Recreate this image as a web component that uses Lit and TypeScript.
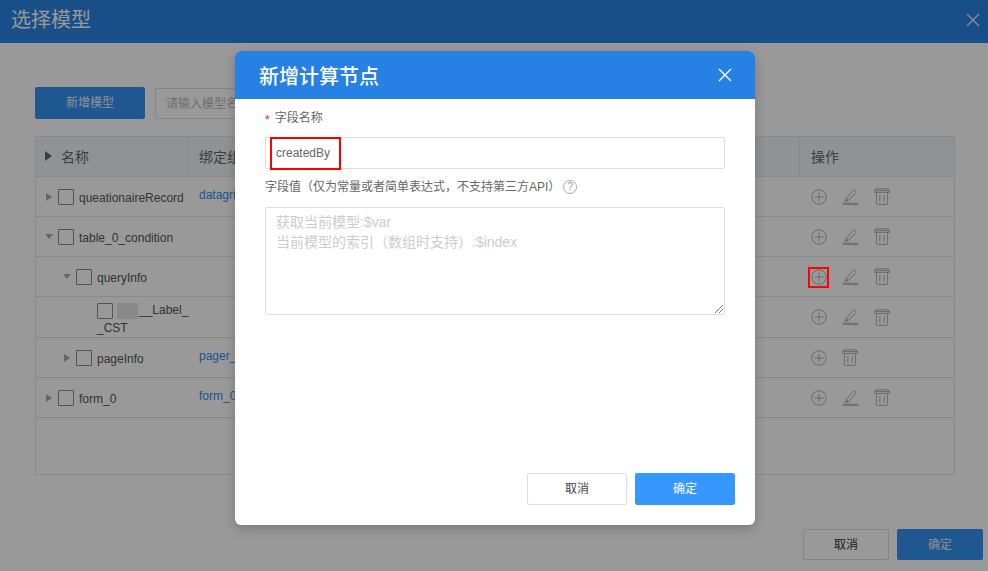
import { LitElement, html, css, svg } from "lit";
import { customElement } from "lit/decorators.js";

const plus = html`<svg class="ic" viewBox="0 0 16 16"><circle cx="8" cy="8" r="7.2"/><path d="M8 3.6v8.8M3.6 8h8.8"/></svg>`;
const edit = html`<svg class="ic edit" viewBox="0 0 17 16"><path d="M.6 14.2h15q.8 0 .8.7t-.8.7H.6M3.2 12.4l1-3L11.2 1.4q.7-.7 1.5 0l1 .9q.6.7 0 1.4L6.4 11.4z"/><path d="M3.2 12.4l3.2-1M4.2 9.4l2.2 2"/></svg>`;
const trash = html`<svg class="ic trash" viewBox="0 0 16 17"><path d="M.6 4.4V3.2Q.6.8 3 .8h10q2.4 0 2.4 2.4v1.2zM.6 2.6h14.8M2.4 4.4v10.8q0 1.2 1.2 1.2h8.8q1.2 0 1.2-1.2V4.4M5.8 7.2v6.4M10.2 7.2v6.4"/></svg>`;
const x = svg`<path d="M1 1l12 12M13 1L1 13"/>`;

type Row = { name: string; indent: number; arrow: "r" | "d" | ""; link?: string; edit?: boolean };
const rows: Row[] = [
  { name: "queationaireRecord", indent: 0, arrow: "r", link: "datagrid_0", edit: true },
  { name: "table_0_condition", indent: 0, arrow: "d", edit: true },
  { name: "queryInfo", indent: 1, arrow: "d", edit: true },
  { name: "", indent: 2, arrow: "", edit: true },
  { name: "pageInfo", indent: 1, arrow: "r", link: "pager_0", edit: false },
  { name: "form_0", indent: 0, arrow: "r", link: "form_0", edit: true },
];

@customElement("app-root")
export class AppRoot extends LitElement {
  static styles = css`
    :host { display: block; width: 988px; height: 571px; position: relative; overflow: hidden; background: #fff;
      font-family: "Liberation Sans", "Noto Sans CJK SC", sans-serif; font-size: 12px; color: #555; }
    .page { display: flex; flex-direction: column; height: 571px; }
    .top { height: 43px; flex: none; background: #2884e4; color: #fff; display: flex; align-items: center; justify-content: space-between; padding: 0 8px 3px 11px; box-sizing: border-box; }
    .top h1 { margin: 0; font-size: 20px; font-weight: 400; line-height: 40px; }
    .top svg { width: 14px; height: 14px; stroke: #e4e8ee; stroke-width: 1.4; fill: none; }
    .tools { display: flex; gap: 10px; padding: 44px 0 0 35px; height: 32px; flex: none; }
    .btn { box-sizing: border-box; display: flex; align-items: center; justify-content: center; border-radius: 2px; font-size: 12px; padding-bottom: 3px; }
    .add { width: 110px; height: 32px; background: #3592f0; color: #e8eef8; }
    .search { width: 240px; height: 31px; margin-top: 1px; border: 1px solid #ddd; border-radius: 2px; box-sizing: border-box; color: #bbb; padding: 0 0 3px 10px; display: flex; align-items: center; }
    .table { margin: 17px 33px 0 35px; height: 339px; flex: none; border: 1px solid #e3e5e8; box-sizing: border-box; }
    .head, .row { display: grid; grid-template-columns: 152px 612px 1fr; box-sizing: border-box; border-bottom: 1px solid #e3e5e8; }
    .head { height: 40px; background: #f2f4f7; font-size: 14px; color: #666; }
    .head > div { display: flex; align-items: center; box-sizing: border-box; border-right: 1px solid #e3e5e8; padding: 0 0 2px 11px; }
    .head > div:last-child { border-right: 0; }
    .head .a { padding-left: 9px; gap: 9px; }
    .row { height: 40px; color: #555; }
    .row.tall { height: 41px; }
    .cell { display: flex; align-items: center; box-sizing: border-box; }
    .txt { margin-top: 2px; }
    .arr { width: 0; height: 0; flex: none; }
    .arr.r { border-left: 6px solid #a8abb2; border-top: 4px solid transparent; border-bottom: 4px solid transparent; margin: 0 6px 0 1px; }
    .arr.d { border-top: 5px solid #a8abb2; border-left: 4px solid transparent; border-right: 4px solid transparent; margin: 0 5px 0 0; }
    .arr.head-arr { border-left: 7px solid #666; border-top: 5px solid transparent; border-bottom: 5px solid transparent; margin: 0; }
    .chk { width: 16px; height: 16px; border: 1px solid #8a8c92; border-radius: 1px; box-sizing: border-box; flex: none; background: #fff; margin-right: 5px; }
    .link { color: #2f8cee; padding-left: 11px; margin-top: -4px; }
    .ops { display: flex; align-items: center; padding-left: 11px; gap: 15px; }
    .ic { width: 16px; height: 16px; fill: none; stroke: #b0b0b0; stroke-width: 1; display: block; flex: none; }
    .ic.edit { width: 17px; }
    .ic.trash { width: 16px; height: 17px; }
    .wrapname { padding-left: 61px; display: block; line-height: 18px; padding-top: 4px; white-space: nowrap; box-sizing: border-box; }
    .wrapname .chk { display: inline-block; vertical-align: middle; margin-right: 4px; }
    .blur { display: inline-block; width: 21px; height: 16px; background: #e4e4e4; vertical-align: middle; filter: blur(0.6px); margin-right: 1px; }
    .foot { display: flex; justify-content: flex-end; gap: 8px; padding: 54px 5px 0 0; }
    .foot .btn { width: 86px; height: 31px; font-size: 12px; }
    .cancel { border: 1px solid #ddd; color: #333; background: #fff; }
    .ok { background: #3592f0; color: #e8eef8; }
    .mask { position: absolute; inset: 0; background: rgba(0, 0, 0, 0.4); }
    .dialog { position: absolute; left: 235px; top: 51px; width: 520px; height: 474px; background: #fff; border-radius: 6px; overflow: hidden; display: flex; flex-direction: column; box-shadow: 0 4px 12px rgba(0,0,0,.2); }
    .dh { height: 48px; flex: none; background: #2780e3; color: #fff; display: flex; align-items: center; justify-content: space-between; padding: 0 23px 0 24px; }
    .dh h2 { margin: 0; font-size: 20px; font-weight: 500; }
    .dh svg { width: 14px; height: 14px; stroke: #fff; stroke-width: 1.4; fill: none; }
    .db { flex: 1; padding: 11px 30px 0; display: flex; flex-direction: column; color: #666; }
    .lbl { line-height: 16px; height: 16px; display: flex; align-items: center; }
    .star { color: #e2231a; line-height: 10px; margin: 4px 5px 0 0; font-family: "Liberation Sans", sans-serif; }
    .input { height: 32px; margin-top: 11px; border: 1px solid #ddd; border-radius: 2px; box-sizing: border-box; display: flex; align-items: center; padding-left: 10px; color: #666; }
    .lbl2 { margin-top: 10px; gap: 3px; }
    .help { width: 14px; height: 14px; border: 1px solid #aaa; border-radius: 50%; font-size: 10px; color: #999; display: flex; align-items: center; justify-content: center; box-sizing: border-box; }
    .ta { height: 108px; margin-top: 12px; border: 1px solid #ddd; border-radius: 2px; box-sizing: border-box; padding: 4px 10px; color: #ccc; font-size: 14px; line-height: 20px; position: relative; }
    .grip { position: absolute; right: 1px; bottom: 1px; width: 8px; height: 8px; }
    .grip path { stroke: #777; stroke-width: 1; fill: none; }
    .df { display: flex; justify-content: flex-end; gap: 8px; padding: 0 20px; height: 32px; margin-top: auto; margin-bottom: 20px; }
    .df .btn { width: 100px; height: 32px; font-size: 12px; }
    .df .cancel { border: 1px solid #ddd; color: #444; }
    .df .ok2 { background: #3698ff; color: #fff; }
    .mark { position: absolute; border: 2px solid #f00; box-sizing: border-box; }
    .m1 { left: 270px; top: 137px; width: 71px; height: 33px; }
    .m2 { left: 808px; top: 267px; width: 21px; height: 21px; }
  `;

  private row(r: Row) {
    if (r.indent === 2) {
      return html`<div class="row tall">
        <div class="wrapname"><span class="chk"></span><span class="blur"></span>__Label_<br />_CST</div>
        <div></div>
        <div class="ops">${plus}${edit}${trash}</div>
      </div>`;
    }
    return html`<div class="row">
      <div class="cell" style="padding-left:${9 + r.indent * 18}px">
        <span class="arr ${r.arrow}"></span><span class="chk"></span><span class="txt">${r.name}</span>
      </div>
      <div class="cell"><span class="link">${r.link ?? ""}</span></div>
      <div class="ops">${plus}${r.edit ? edit : ""}${trash}</div>
    </div>`;
  }

  render() {
    return html`
      <div class="page">
        <div class="top"><h1>选择模型</h1><svg viewBox="0 0 14 14">${x}</svg></div>
        <div class="tools">
          <div class="btn add">新增模型</div>
          <div class="search">请输入模型名称</div>
        </div>
        <div class="table">
          <div class="head">
            <div class="a"><span class="arr head-arr"></span>名称</div>
            <div>绑定组件</div>
            <div>操作</div>
          </div>
          ${rows.map((r) => this.row(r))}
        </div>
        <div class="foot">
          <div class="btn cancel">取消</div>
          <div class="btn ok">确定</div>
        </div>
      </div>
      <div class="mask"></div>
      <div class="dialog">
        <div class="dh"><h2>新增计算节点</h2><svg viewBox="0 0 14 14">${x}</svg></div>
        <div class="db">
          <div class="lbl"><span class="star">*</span>字段名称</div>
          <div class="input">createdBy</div>
          <div class="lbl lbl2">字段值（仅为常量或者简单表达式，不支持第三方API）<span class="help">?</span></div>
          <div class="ta">获取当前模型:$var<br />当前模型的索引（数组时支持）:$index
            <svg class="grip" viewBox="0 0 8 8"><path d="M0 8l8-8M4 8l4-4"/></svg>
          </div>
        </div>
        <div class="df">
          <div class="btn cancel">取消</div>
          <div class="btn ok2">确定</div>
        </div>
      </div>
      <div class="mark m1"></div>
      <div class="mark m2"></div>
    `;
  }
}
